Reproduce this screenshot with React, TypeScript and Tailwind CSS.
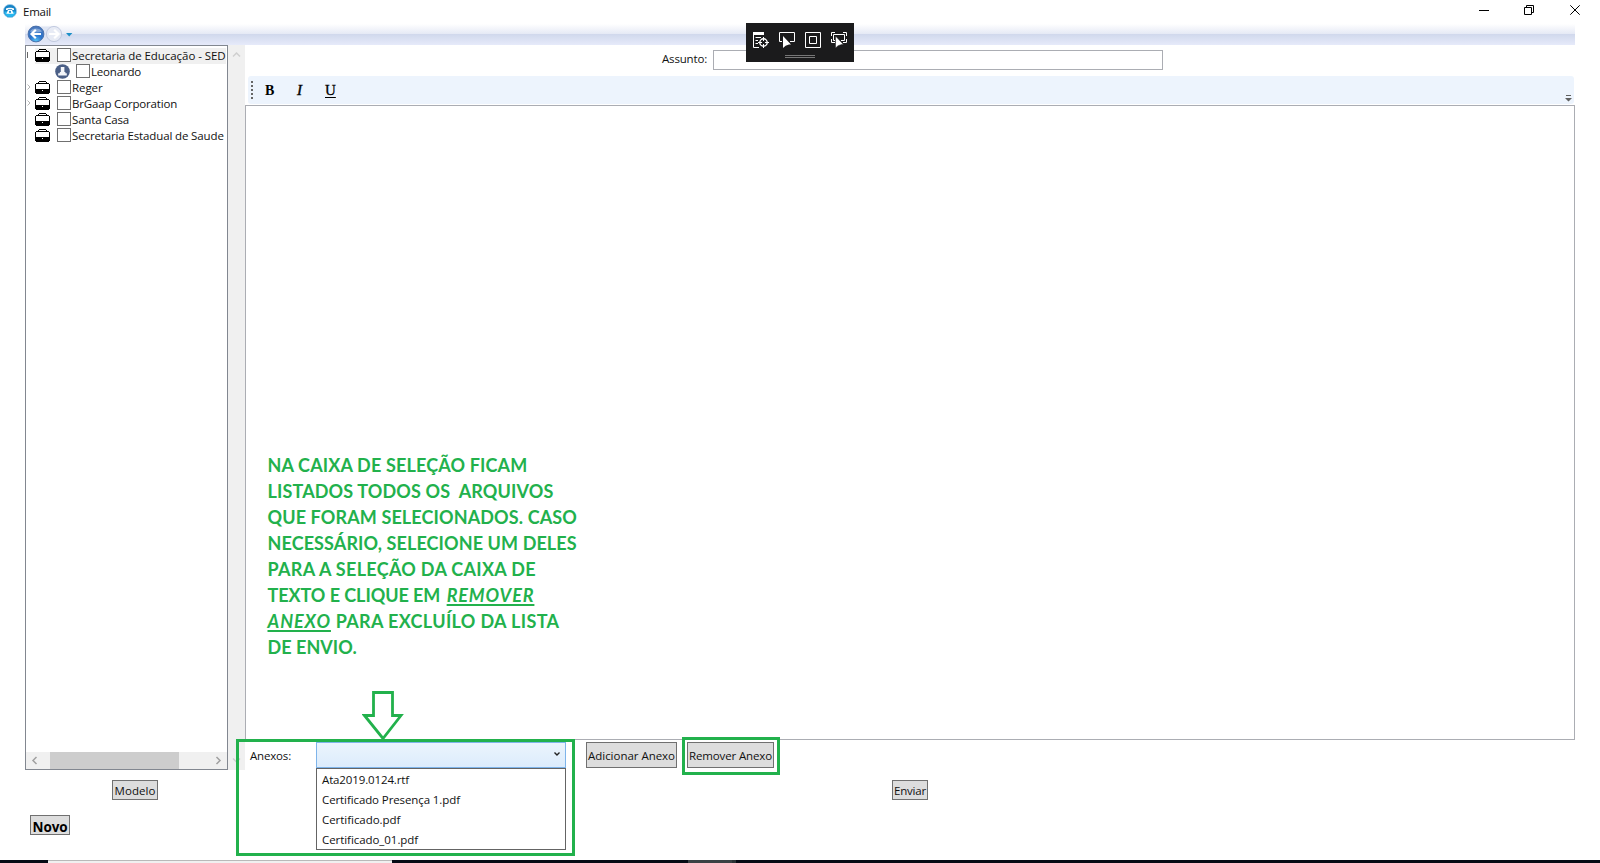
import type { ReactNode } from "react";

function Briefcase() {
  return (
    <svg width="15" height="13" viewBox="0 0 15 13" className="-mt-px block shrink-0" shapeRendering="crispEdges">
      <path d="M4 0h7v1h1v1h2v1h1v9h-1v1H1v-1H0V3h1V2h2V1h1z" fill="#000" />
      <path d="M4 1h7v1H4zM1 3h13v5H1z" fill="#fff" />
      <path d="M7 9h1v1H7z" fill="#fff" />
    </svg>
  );
}

function Person() {
  return (
    <svg width="15" height="15" viewBox="0 0 15 15" className="block shrink-0">
      <circle cx="7.5" cy="7.5" r="7.3" fill="#4b5f86" />
      <path d="M5.800 3h3.600v5h1v1.200h1.400v2.300H3.200V9.200h1.600V8h1z" fill="#f4f6fa" />
    </svg>
  );
}

function CheckBox() {
  return <span className="block h-[14px] w-[14px] shrink-0 border border-[#707070] bg-white" />;
}

function Chevron({ d, color = "#a0a0a0" }: { d: string; color?: string }) {
  return (
    <svg width="9" height="9" viewBox="0 0 9 9" className="block" fill="none" stroke={color} strokeWidth="1.5">
      <path d={d} />
    </svg>
  );
}

function TreeRow({ label, tracking, mark, selected }: { label: string; tracking: string; mark?: ReactNode; selected?: boolean }) {
  return (
    <div className="flex h-4 items-center">
      <div className="flex h-4 w-[9px] shrink-0 items-center">{mark}</div>
      <div className={selected ? "flex h-4 w-[191px] items-center bg-[#f0f0f0]" : "flex h-4 w-[191px] items-center"}>
        <Briefcase />
        <div className="w-[7px] shrink-0" />
        <div className="-mt-[2px]"><CheckBox /></div>
        <span className={`whitespace-pre pl-px leading-4 ${tracking}`}>{label}</span>
      </div>
    </div>
  );
}

function Expander() {
  return (
    <svg width="4" height="6" viewBox="0 0 4 6" className="-mt-[2px] ml-px block" fill="none" stroke="#b4b4b4">
      <path d="M0.5 0.5L3 3L0.5 5.5" />
    </svg>
  );
}

function Button({ children, className }: { children: ReactNode; className: string }) {
  return (
    <button className={`flex shrink-0 items-center justify-center whitespace-nowrap border border-[#707070] bg-[#ddd] ${className}`}>
      {children}
    </button>
  );
}

function TitleBar() {
  return (
    <header className="flex h-6 shrink-0 items-start">
      <svg width="14" height="14" viewBox="0 0 14 14" className="ml-[3px] mt-1 block">
        <circle cx="7" cy="7" r="6.6" fill="#1684c7" stroke="#9fcbe6" strokeWidth="0.9" />
        <path d="M1.4 7.5a5.6 5.6 0 0 0 11.2 0z" fill="#28b6ee" />
        <path d="M3 6.1V4.6C4.6 3.3 9.4 3.3 11 4.600V6.100H9.200V5.200H4.800V6.100z" fill="#fff" />
        <path d="M5 6h4l1.700 3.800H3.300z" fill="#fff" />
        <circle cx="7" cy="7.900" r="1.100" fill="#1c93d3" />
      </svg>
      <span className="ml-[6px] mt-1 leading-4 tracking-[-0.25px]">Email</span>
      <div className="flex-1" />
      <svg width="102" height="12" viewBox="0 0 102 12" className="mr-[19px] mt-1 block" fill="none" stroke="#000">
        <path d="M0 6.500h10" />
        <path d="M45.500 3.500h7v7h-7zM47.500 3.500v-2h7v7h-2" />
        <path d="M91.300 1.300l9.400 9.400M100.700 1.300l-9.400 9.400" />
      </svg>
    </header>
  );
}

function NavBar() {
  return (
    <nav className="ml-[25px] flex h-[21px] w-[1550px] shrink-0 items-start bg-[linear-gradient(to_bottom,#ffffff_0px,#e5e9f5_10px,#d0d8ec_10px,#e6eafa_21px)]">
      <svg width="50" height="20" viewBox="0 0 50 20" className="block">
        <defs>
          <radialGradient id="back" cx="0.5" cy="0.95" r="0.9">
            <stop offset="0" stopColor="#58c3f5" />
            <stop offset="0.45" stopColor="#2a74cd" />
            <stop offset="1" stopColor="#4b78bb" />
          </radialGradient>
        </defs>
        <path d="M10 2.500h20v15H10z" fill="#dfe5f3" />
        <circle cx="11" cy="10" r="7.900" fill="url(#back)" stroke="#426aa6" strokeWidth="0.900" />
        <path d="M5 7.500a6.500 5 0 0 1 12 0q-6 2-12 0z" fill="#fff" opacity="0.350" />
        <path d="M16 10H6.600M10.800 5.700L6.500 10l4.300 4.300" fill="none" stroke="#fff" strokeWidth="2.200" />
        <circle cx="29" cy="10" r="7.600" fill="#e7ebf5" stroke="#c3cbe0" />
        <path d="M24 10h9.400M29.200 5.700l4.300 4.300-4.300 4.300" fill="none" stroke="#fff" strokeWidth="2.200" />
        <path d="M41 9h6.400l-3.200 3.600z" fill="#1b8fc7" />
      </svg>
    </nav>
  );
}

function ContactTree() {
  return (
    <aside className="flex w-[203px] shrink-0 flex-col overflow-hidden border border-[#828790]">
      <div className="flex-1 pt-[2px]">
        <TreeRow selected label="Secretaria de Educação - SED" tracking="tracking-[-0.06px]" mark={<span className="-mt-[2px] ml-px block h-[6px] w-px bg-[#666]" />} />
        <div className="flex h-4 items-center pl-[29px]">
          <div className="-mt-px"><Person /></div>
          <div className="w-[6px] shrink-0" />
          <div className="-mt-[2px]"><CheckBox /></div>
          <span className="pl-px leading-4 tracking-[-0.18px]">Leonardo</span>
        </div>
        <TreeRow label="Reger" tracking="tracking-[-0.09px]" mark={<Expander />} />
        <TreeRow label="BrGaap Corporation" tracking="tracking-[-0.17px]" mark={<Expander />} />
        <TreeRow label="Santa Casa" tracking="tracking-[-0.17px]" />
        <TreeRow label="Secretaria Estadual de Saude" tracking="tracking-[-0.13px]" />
      </div>
      <div className="flex h-[17px] items-center bg-[#f0f0f0]">
        <div className="flex w-6 pl-[4px]"><Chevron d="M6.500 1L3 4.500L6.500 8" /></div>
        <div className="h-full w-[129px] bg-[#cdcdcd]" />
        <div className="flex flex-1 justify-end pr-[4px]"><Chevron d="M2.500 1L6 4.500L2.500 8" /></div>
      </div>
    </aside>
  );
}

function InspectorToolbar() {
  return (
    <div className="absolute left-[746px] top-[23px] flex h-[39px] w-[108px] flex-col items-center bg-[#1b1b1c]">
      <svg width="94" height="17" viewBox="0 0 94 17" className="mt-[8px] block" fill="none" stroke="#fff">
        <path d="M0 1h11v3H0z" fill="#fff" stroke="none" />
        <path d="M0.500 3v13.500H6M2.500 6.500H8M2.500 9.500H5M2.500 12.500H5" />
        <circle cx="10.500" cy="11.500" r="3.700" strokeWidth="1.400" />
        <path d="M10.500 6v4M10.500 13v4M5 11.500h4M12 11.500h4" />
        <path d="M29 10.500h-2.500v-9h15v9H37" />
        <path d="M30 5v12l2.600-2.300L36 13.600h2z" fill="#fff" stroke="none" />
        <path d="M52.500 1.500h15v15h-15zM56.500 5.500h7v7h-7z" />
        <path d="M78.500 5v-3.500H82M90 1.500h3.500V5M78.500 8v3.500H82M93.500 8v3.500H90" />
        <path d="M82 9.500h-1.500v-6h11v6H88" />
        <path d="M82.500 5v12l2.600-2.300 3.400-1.100h2z" fill="#fff" stroke="#1b1b1c" strokeWidth="0.500" />
      </svg>
      <div className="mt-[7px] h-[3px] w-[30px] border-y border-[#777]" />
    </div>
  );
}

function Editor() {
  return (
    <main className="flex w-[1330px] shrink-0 flex-col">
      <div className="flex h-[31px] shrink-0 items-start">
        <label className="ml-[417px] mt-[6px] w-[51px] leading-4 tracking-[-0.17px]">Assunto:</label>
        <input className="mt-[5px] h-5 w-[450px] border border-[#abadb3] bg-white" />
      </div>
      <div className="ml-[3px] flex h-7 w-[1326px] shrink-0 items-center rounded-[3px] bg-[#edf4fd] font-['Liberation_Serif'] text-[15px] text-black">
        <div className="ml-[3px] flex flex-col gap-[2px]">
          <span className="h-[2px] w-[2px] bg-[#666]" />
          <span className="h-[2px] w-[2px] bg-[#666]" />
          <span className="h-[2px] w-[2px] bg-[#666]" />
          <span className="h-[2px] w-[2px] bg-[#666]" />
          <span className="h-[2px] w-[2px] bg-[#666]" />
        </div>
        <b className="ml-[12px] w-[32px] text-[14px]">B</b>
        <i className="w-[28px] text-[15px] [-webkit-text-stroke:0.4px_#000]">I</i>
        <span className="text-[15px] underline underline-offset-2 [-webkit-text-stroke:0.3px_#000]">U</span>
        <div className="flex-1" />
        <svg width="7" height="7" viewBox="0 0 7 7" className="mr-[2px] mt-[16px] block" fill="#606060">
          <path d="M1 0h5v1H1zM0 3h7L3.500 6.500z" />
        </svg>
      </div>
      <div className="mt-px h-[635px] shrink-0 border border-[#abadb3] bg-white" />
      <div className="flex h-[30px] items-start pt-[2px]">
        <label className="ml-[5px] mt-[6px] w-[66px] leading-4 tracking-[-0.17px]">Anexos:</label>
        <div className="relative h-[26px] w-[250px]">
          <div className="flex h-[26px] items-start justify-end border border-[#7eb4ea] bg-gradient-to-b from-[#ebf4fc] to-[#dcecfc] pr-[5px] pt-[8px]">
            <svg width="6" height="6" viewBox="0 0 6 6" className="block" fill="none" stroke="#222" strokeWidth="1.400">
              <path d="M0.500 1.500L3 4L5.500 1.500" />
            </svg>
          </div>
          <ul className="absolute left-0 top-[26px] h-[82px] w-[250px] border border-[#646464] bg-white pl-[5px] pt-[1px] leading-5">
            <li className="h-5 tracking-[-0.13px]">Ata2019.0124.rtf</li>
            <li className="h-5 tracking-[-0.1px]">Certificado Presença 1.pdf</li>
            <li className="h-5 tracking-[-0.04px]">Certificado.pdf</li>
            <li className="h-5 tracking-[-0.06px]">Certificado_01.pdf</li>
          </ul>
        </div>
        <Button className="ml-5 h-[26px] w-[91px] pt-[2px] tracking-[-0.03px]">Adicionar Anexo</Button>
        <Button className="ml-[10px] h-[26px] w-[87px] pt-[2px] tracking-[-0.13px]">Remover Anexo</Button>
      </div>
    </main>
  );
}

function Annotations() {
  return (
    <>
      <p className="absolute left-[267.5px] top-[452px] whitespace-pre font-['Lato'] text-[18px] font-bold leading-[26px] text-[#22b14c]">
        <span className="tracking-[0.15px]">NA CAIXA DE SELEÇÃO FICAM</span>{"\n"}
        <span className="tracking-[0.14px]">LISTADOS TODOS OS{"  "}ARQUIVOS</span>{"\n"}
        <span className="tracking-[0.12px]">QUE FORAM SELECIONADOS. CASO</span>{"\n"}
        <span className="tracking-[0.1px]">NECESSÁRIO, SELECIONE UM DELES</span>{"\n"}
        <span className="tracking-[0.3px]">PARA A SELEÇÃO DA CAIXA DE</span>{"\n"}
        <span className="tracking-[-0.06px]">TEXTO E CLIQUE EM </span>
        <i className="ml-[2px] tracking-[0.9px] underline decoration-2 underline-offset-[2px]">REMOVER</i>{"\n"}
        <i className="tracking-[0.95px] underline decoration-2 underline-offset-[2px]">ANEXO</i>
        <span className="tracking-[0.35px]"> PARA EXCLUÍLO DA LISTA</span>{"\n"}
        <span className="tracking-[0.04px]">DE ENVIO.</span>
      </p>
      <svg width="42" height="50" viewBox="0 0 42 50" className="absolute left-[362px] top-[690px]" fill="none" stroke="#22b14c" strokeWidth="2.800">
        <path d="M11.500 2.500h19v23h8.500L21 48.500 2.500 25.500h9z" />
      </svg>
      <div className="absolute left-[236px] top-[739px] h-[117px] w-[339px] border-[3px] border-[#22b14c]" />
      <div className="absolute left-[682px] top-[737px] h-[38px] w-[98px] border-[3px] border-[#22b14c]" />
    </>
  );
}

export default function App() {
  return (
    <div className="relative flex h-[863px] w-[1600px] flex-col overflow-hidden bg-white font-['Open_Sans',sans-serif] text-[11.5px] text-[#111]">
      <TitleBar />
      <NavBar />
      <div className="flex h-[725px] shrink-0 pl-[25px]">
        <ContactTree />
        <div className="flex w-[17px] shrink-0 flex-col items-center justify-between bg-[#f0f0f0] py-[5px]">
          <Chevron d="M1 6.500L4.500 3L8 6.500" color="#cfcfcf" />
          <Chevron d="M1 2.500L4.500 6L8 2.500" color="#cfcfcf" />
        </div>
        <Editor />
      </div>
      <div className="flex h-[45px] shrink-0 items-start pt-[10px]">
        <Button className="ml-[112px] h-5 w-[46px] pt-[2px] tracking-[0.07px]">Modelo</Button>
        <Button className="ml-[734px] h-5 w-9 pt-[2px] tracking-[-0.200px]">Enviar</Button>
      </div>
      <div className="flex h-[45px] shrink-0 items-start">
        <Button className="ml-[30px] h-5 w-10 pt-[5px] text-[13.5px] font-bold tracking-[-0.1px] text-black">Novo</Button>
      </div>
      <footer className="flex h-[3px] shrink-0 bg-[#050a14]">
        <div className="ml-12 w-[344px] border-t border-[#b9b9b9] bg-[#f0f0f0]" />
        <div className="ml-[296px] w-[48px] border-r-4 border-[#2b3336] bg-[#3a4144]" />
      </footer>
      <Annotations />
      <InspectorToolbar />
    </div>
  );
}
